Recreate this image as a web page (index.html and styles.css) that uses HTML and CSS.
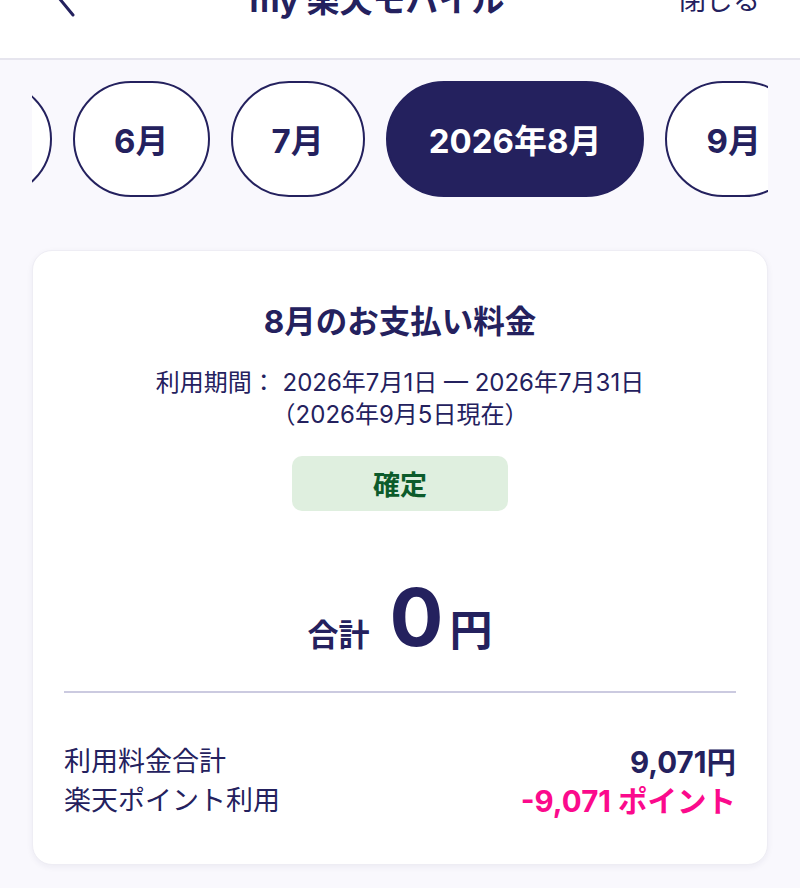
FILE: index.html
```html
<!DOCTYPE html>
<html lang="ja">
<head>
<meta charset="utf-8">
<title>my 楽天モバイル</title>
<link rel="stylesheet" href="styles.css">
</head>
<body>
<header class="header">
  <div class="bar">
    <svg class="back" width="18" height="38" viewBox="0 0 18 38"><path d="M16 2 L2 19 L16 36" fill="none" stroke="#24215e" stroke-width="3" stroke-linecap="round" stroke-linejoin="round"/></svg>
    <div class="title">my 楽天モバイル</div>
    <div class="close">閉じる</div>
  </div>
</header>

<nav class="tabs">
  <div class="pill first">5月</div>
  <div class="pill">6月</div>
  <div class="pill">7月</div>
  <div class="pill active">2026年8月</div>
  <div class="pill">9月</div>
  <div class="pill">10月</div>
</nav>

<main class="card">
  <h1 class="card-title">8月のお支払い料金</h1>
  <p class="period">利用期間： 2026年7月1日 — 2026年7月31日<br>（2026年9月5日現在）</p>
  <div class="badge">確定</div>
  <div class="total">
    <span class="total-label">合計</span>
    <span class="total-num">0</span><span class="total-yen">円</span>
  </div>
  <hr class="divider">
  <div class="rows">
    <div class="row">
      <span class="label">利用料金合計</span>
      <span class="value">9,071円</span>
    </div>
    <div class="row">
      <span class="label">楽天ポイント利用</span>
      <span class="value pink">-9,071 ポイント</span>
    </div>
  </div>
</main>
</body>
</html>
```

FILE: styles.css
```css
* { box-sizing: border-box; }
html, body { margin: 0; padding: 0; }
body {
  background: #f9f8fd;
  color: #24215e;
  font-family: Inter, "Noto Sans CJK JP", sans-serif;
  width: 800px;
  height: 888px;
  overflow: hidden;
}

.header {
  height: 60px;
  background: #fff;
  border-bottom: 2px solid #e6e5ee;
  overflow: hidden;
}
.bar {
  height: 64px;
  margin-top: -34px;
  display: flex;
  align-items: center;
  justify-content: space-between;
  padding: 0 40px 0 57px;
}
.back { display: block; flex: none; }
.title {
  font-size: 33px;
  font-weight: 700;
}
.close {
  font-size: 27px;
  font-weight: 400;
}

.tabs {
  margin: 21px 32px 0;
  display: flex;
  gap: 21px;
  overflow: hidden;
}
.pill {
  flex: none;
  height: 116px;
  padding: 0 39px;
  border: 2px solid #24215e;
  border-radius: 60px;
  background: #fff;
  display: flex;
  align-items: center;
  font-size: 33px;
  font-weight: 700;
  color: #24215e;
}
.pill.first { margin-left: -116px; }
.pill.active {
  padding: 0 41px;
  background: #24215e;
  color: #fff;
}

.card {
  display: block;
  margin: 53px 32px 0;
  background: #fff;
  border-radius: 20px;
  border: 1px solid #eeedf4;
  box-shadow: 0 2px 6px rgba(30, 30, 80, 0.06);
  padding: 51px 31px 46px;
}
.card-title {
  margin: 0;
  text-align: center;
  font-size: 31.5px;
  line-height: 40px;
  font-weight: 700;
}
.period {
  margin: 25px 0 0;
  text-align: center;
  font-size: 24px;
  line-height: 32px;
  font-weight: 400;
}
.badge {
  width: 216px;
  height: 55px;
  margin: 25px auto 0;
  border-radius: 10px;
  background: #dfefdf;
  color: #0c5b2b;
  display: flex;
  align-items: center;
  justify-content: center;
  font-size: 27px;
  font-weight: 700;
}
.total {
  margin-top: 66px;
  display: flex;
  justify-content: center;
  align-items: baseline;
  height: 80px;
  line-height: 80px;
  font-weight: 700;
}
.total-label {
  font-size: 31px;
  margin-right: 20px;
}
.total-num {
  font-size: 80px;
}
.total-yen {
  font-size: 43px;
  margin-left: 6px;
}
.divider {
  margin: 34px 0 0;
  border: 0;
  height: 2px;
  background: #cbcae0;
}
.rows {
  margin-top: 47px;
}
.row {
  display: flex;
  justify-content: space-between;
  align-items: center;
  height: 39px;
  font-size: 27px;
}
.value {
  font-weight: 700;
  font-size: 29.5px;
}
.pink { color: #fb0a8c; }
```
